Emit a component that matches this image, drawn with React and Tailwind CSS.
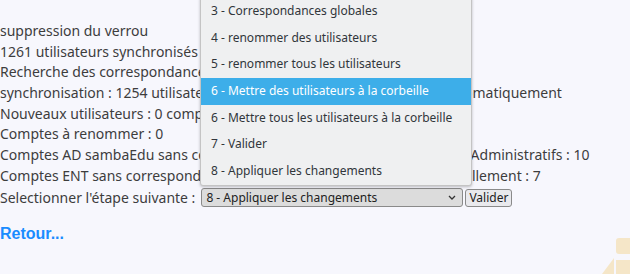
import React from 'react';

const LINES = [
  'suppression du verrou',
  '1261 utilisateurs synchronisés',
  'Recherche des correspondances',
  'synchronisation : 1254 utilisateurs ont été mis en correspondances automatiquement',
  'Nouveaux utilisateurs : 0 comptes à créer',
  'Comptes à renommer : 0',
  "Comptes AD sambaEdu sans correspondance dans l'ENT : Profs, Eleves, Administratifs : 10",
  'Comptes ENT sans correspondance AD sambaEdu à créer ou lier manuellement : 7',
];

const OPTIONS = [
  '3 - Correspondances globales',
  '4 - renommer des utilisateurs',
  '5 - renommer tous les utilisateurs',
  '6 - Mettre des utilisateurs à la corbeille',
  '6 - Mettre tous les utilisateurs à la corbeille',
  '7 - Valider',
  '8 - Appliquer les changements',
];

export default function App() {
  return (
    <div className="relative h-[274px] w-[630px] overflow-hidden bg-[#f7f7fd] text-[#3d3d3d] font-['Noto_Sans',sans-serif] text-[14px]">
      {/* watermark logo */}
      <svg className="absolute right-0 bottom-0" width="30" height="40" viewBox="0 0 30 40">
        <rect x="16" y="4" width="30" height="16" rx="3" fill="#f5e6c8" />
        <polygon points="2,40 14,24 14,40" fill="#f5e6c8" />
        <rect x="16" y="26" width="20" height="14" fill="#f5e6c8" />
      </svg>

      <div className="relative pt-[21px]">
        {LINES.map((line) => (
          <div key={line} className="h-[20.7px] leading-[20.7px] whitespace-nowrap">{line}</div>
        ))}
        <div className="flex items-center h-[22px] whitespace-nowrap">
          <span>Selectionner l'étape suivante :</span>
          <div className="ml-[6px] flex h-[19px] w-[262px] items-center justify-between rounded-[3px] border border-[#8a8a8a] bg-[#dcdcdc] pl-[4px] pr-[6px] text-[12px] text-[#222]">
            <span>8 - Appliquer les changements</span>
            <svg width="8" height="5" viewBox="0 0 8 5"><path d="M1 1 L4 4 L7 1" fill="none" stroke="#333" strokeWidth="1.3" /></svg>
          </div>
          <button className="ml-[2px] h-[18px] rounded-[3px] border border-[#8a8a8a] bg-[#e9e9ed] px-[3px] text-[12px] leading-none text-[#222]">Valider</button>
        </div>
        <div className="mt-[13px] font-['Liberation_Sans',sans-serif] text-[16px] font-bold text-[#1a8cff]">Retour...</div>
      </div>

      {/* opened select popup */}
      <div className="absolute left-[200px] top-[-3px] w-[272px] rounded-b-[3px] border border-[#c4c4c4] bg-[#eff0f1] text-[12px] text-[#31363b] shadow-[0_1px_3px_rgba(0,0,0,0.25)]">
        {OPTIONS.map((opt, i) => (
          <div
            key={opt}
            className={`h-[26.7px] leading-[26.7px] pl-[10px] whitespace-nowrap ${i === 3 ? 'bg-[#3daee9] text-white' : ''}`}
          >
            {opt}
          </div>
        ))}
      </div>
    </div>
  );
}
